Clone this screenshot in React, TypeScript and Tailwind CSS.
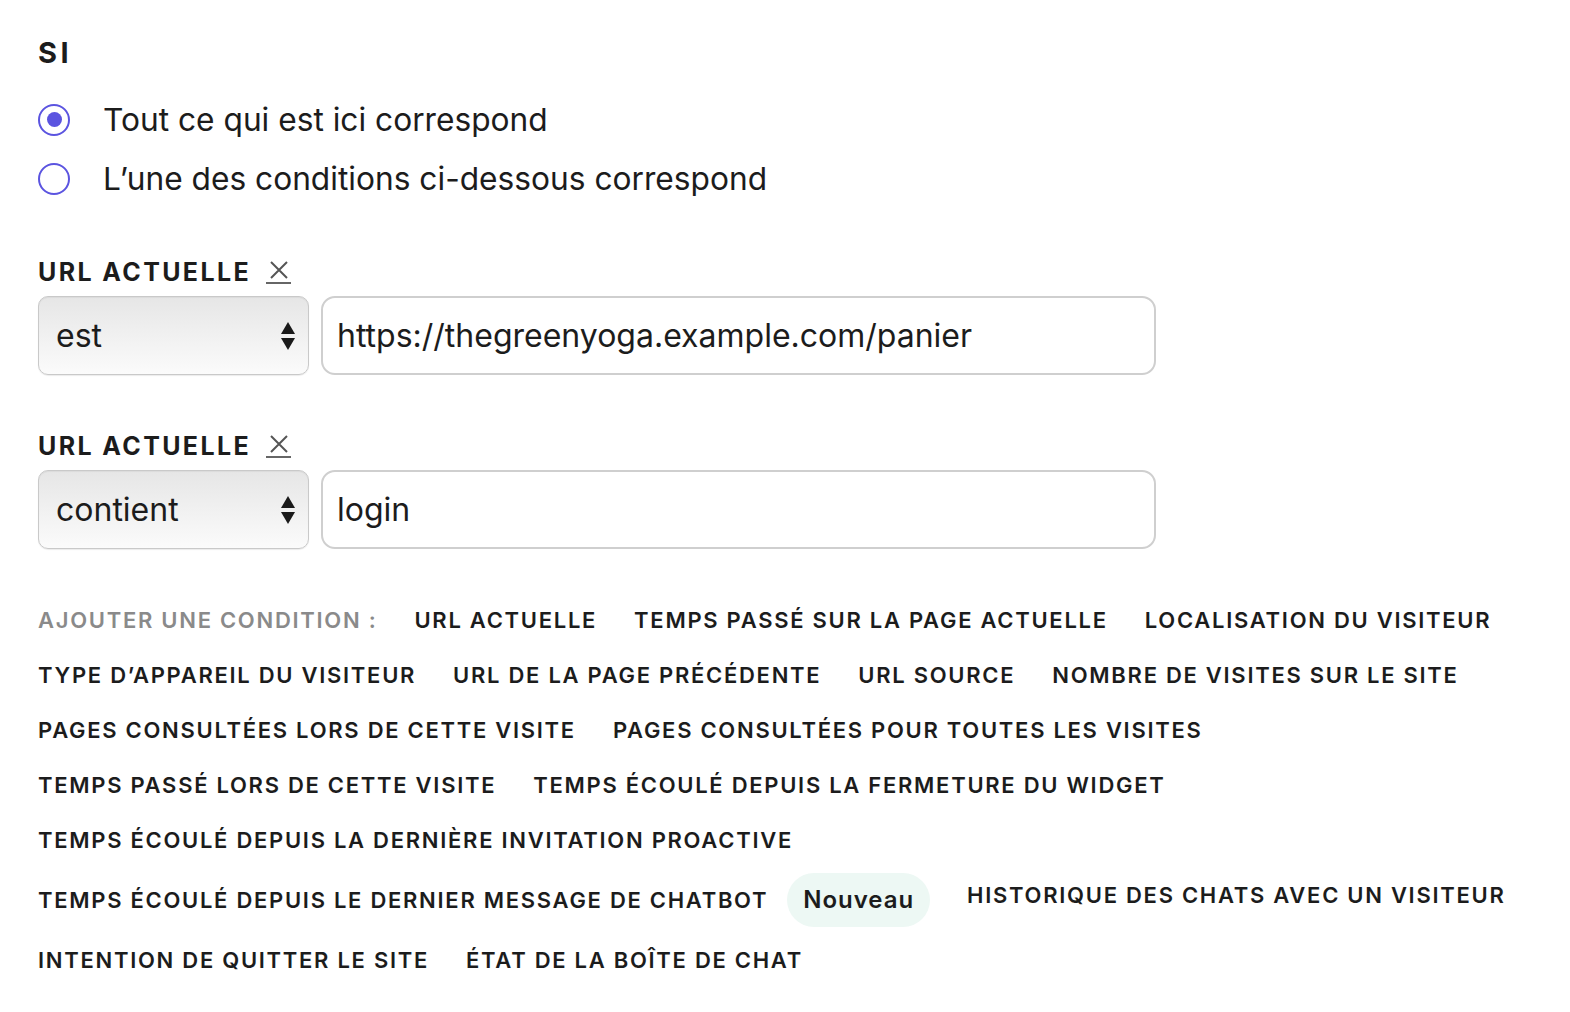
import React from "react";

const font = { fontFamily: "Inter, 'Noto Sans', sans-serif" };

function Radio({ checked, label }: { checked: boolean; label: string }) {
  return (
    <div className="flex items-center h-[59px]">
      <span className="w-[32px] h-[32px] rounded-full border-2 border-[#5b54e0] flex items-center justify-center bg-white">
        {checked && <span className="w-[15px] h-[15px] rounded-full bg-[#5b54e0]" />}
      </span>
      <span className="ml-[33px] text-[31.7px] text-[#1c1c1c] leading-none">{label}</span>
    </div>
  );
}

function Arrows() {
  return (
    <svg width="16" height="30" viewBox="0 0 16 30" className="text-[#1a1a1a]">
      <polygon points="8,1 15,13 1,13" fill="currentColor" />
      <polygon points="1,17 15,17 8,29" fill="currentColor" />
    </svg>
  );
}

function Condition({ op, value }: { op: string; value: string }) {
  return (
    <div>
      <div className="flex items-center h-[30px]">
        <span className="text-[25px] font-bold tracking-[0.095em] text-[#1c1c1c] leading-none">URL ACTUELLE</span>
        <span className="ml-[15px] flex flex-col items-center">
          <svg width="20" height="20" viewBox="0 0 20 20">
            <path d="M2 2 L18 18 M18 2 L2 18" stroke="#555" strokeWidth="2" />
          </svg>
          <span className="block w-[25px] h-[2px] bg-[#666] mt-[2px]" />
        </span>
      </div>
      <div className="flex mt-[9px] gap-[12px]">
        <div className="w-[271px] h-[79px] rounded-[10px] border border-[#c9c9c9] bg-gradient-to-b from-[#e6e6e6] to-[#fbfbfb] shadow-[inset_0_1px_1px_rgba(0,0,0,0.05),0_1px_1px_rgba(0,0,0,0.08)] flex items-center justify-between pl-[17px] pr-[12px]">
          <span className="text-[32px] text-[#1c1c1c] leading-none">{op}</span>
          <Arrows />
        </div>
        <div className="w-[835px] h-[79px] rounded-[14px] border-2 border-[#cfcfcf] bg-white flex items-center pl-[14px]">
          <span className="text-[32px] text-[#1c1c1c] leading-none">{value}</span>
        </div>
      </div>
    </div>
  );
}

const itemCls = "h-[44px] flex items-center text-[22px] font-semibold tracking-[0.078em] text-[#1c1c1c] leading-none whitespace-nowrap";

export default function App() {
  const row1 = [
    "URL ACTUELLE",
    "TEMPS PASSÉ SUR LA PAGE ACTUELLE",
    "LOCALISATION DU VISITEUR",
    "TYPE D’APPAREIL DU VISITEUR",
    "URL DE LA PAGE PRÉCÉDENTE",
    "URL SOURCE",
    "NOMBRE DE VISITES SUR LE SITE",
    "PAGES CONSULTÉES LORS DE CETTE VISITE",
    "PAGES CONSULTÉES POUR TOUTES LES VISITES",
    "TEMPS PASSÉ LORS DE CETTE VISITE",
    "TEMPS ÉCOULÉ DEPUIS LA FERMETURE DU WIDGET",
    "TEMPS ÉCOULÉ DEPUIS LA DERNIÈRE INVITATION PROACTIVE",
  ];
  const row2 = ["HISTORIQUE DES CHATS AVEC UN VISITEUR", "INTENTION DE QUITTER LE SITE", "ÉTAT DE LA BOÎTE DE CHAT"];
  return (
    <div style={font} className="min-h-screen bg-white pl-[38px] pt-[32px] pr-[30px]">
      <div className="text-[29px] font-bold tracking-[0.12em] text-[#1c1c1c] leading-none h-[40px] flex items-center">SI</div>
      <div className="mt-[18px]">
        <Radio checked label="Tout ce qui est ici correspond" />
        <Radio checked={false} label="L’une des conditions ci-dessous correspond" />
      </div>
      <div className="mt-[49px]">
        <Condition op="est" value="https://thegreenyoga.example.com/panier" />
      </div>
      <div className="mt-[56px]">
        <Condition op="contient" value="login" />
      </div>
      <div className="mt-[49px] flex flex-wrap items-start gap-x-[37px] gap-y-[11px] max-w-[1500px]">
        <span className={itemCls + " !text-[#8a8a8a]"}>AJOUTER UNE CONDITION :</span>
        {row1.map((t) => (
          <span key={t} className={itemCls}>{t}</span>
        ))}
        <span className="h-[54px] flex items-center gap-[19px]">
          <span className="text-[22px] font-semibold tracking-[0.078em] text-[#1c1c1c] leading-none whitespace-nowrap">
            TEMPS ÉCOULÉ DEPUIS LE DERNIER MESSAGE DE CHATBOT
          </span>
          <span className="h-[54px] px-[16px] rounded-full bg-[#edf8f4] flex items-center text-[24px] font-semibold tracking-[0.04em] text-[#1c1c1c] leading-none">
            Nouveau
          </span>
        </span>
        {row2.map((t) => (
          <span key={t} className={itemCls}>{t}</span>
        ))}
      </div>
    </div>
  );
}
